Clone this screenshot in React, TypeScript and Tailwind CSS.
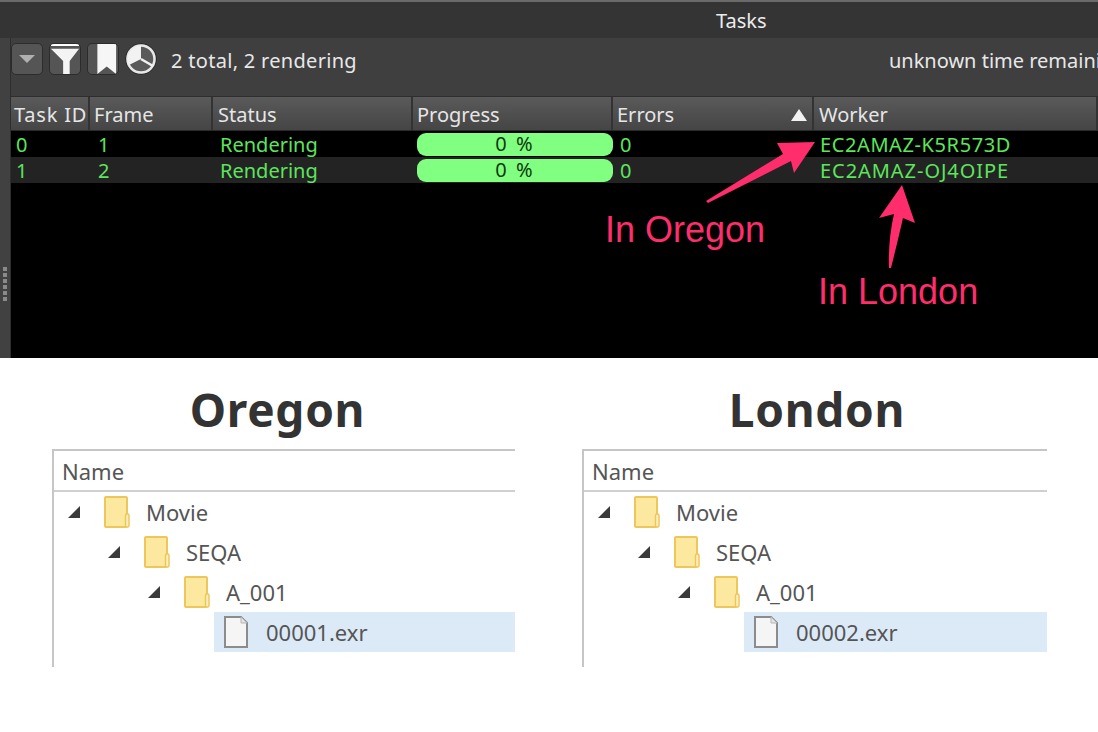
const uiFont = "font-['Noto_Sans',sans-serif]";

const columns = [
  { label: 'Task ID', width: 'w-[79px]', extra: 'pl-[3px] tracking-[0.8px]' },
  { label: 'Frame', width: 'w-[123px]', extra: 'pl-[4px]' },
  { label: 'Status', width: 'w-[200px]', extra: 'pl-[5px]' },
  { label: 'Progress', width: 'w-[200px]', extra: 'pl-[4px]' },
  { label: 'Errors', width: 'w-[201px]', extra: 'pl-[4px]', sorted: true },
  { label: 'Worker', width: 'flex-1', extra: 'pl-[5px]' },
];

const rows = [
  { id: '0', frame: '1', worker: 'EC2AMAZ-K5R573D', bg: 'bg-black', spacing: 'tracking-[0.6px]' },
  { id: '1', frame: '2', worker: 'EC2AMAZ-OJ4OIPE', bg: 'bg-[#232323]', spacing: 'tracking-[0.95px]' },
];

function ToolButton({ children }: { children: React.ReactNode }) {
  return (
    <div className="w-8 h-8 shrink-0 rounded-[5px] border border-[#2c2c2c] bg-[#555555] flex items-center justify-center overflow-hidden">
      {children}
    </div>
  );
}

function TaskTable() {
  return (
    <div className="flex-1 flex flex-col bg-black">
      <div className="flex h-[35px] pb-[1px] bg-[#2a2a2a] border-t border-[#2e2e2e]">
        {columns.map((c) => (
          <div
            key={c.label}
            className={`${c.width} ${c.extra} flex items-center justify-between pr-[5px] pt-[3px] bg-gradient-to-b from-[#5a5a5a] to-[#454545] border-r-2 border-[#333333] text-[#e6e6e6] text-[20px] whitespace-nowrap`}
          >
            <span>{c.label}</span>
            {c.sorted && (
              <svg width="16" height="12" viewBox="0 0 16 12">
                <path d="M8 0 L16 12 L0 12 Z" fill="#f2f2f2" />
              </svg>
            )}
          </div>
        ))}
      </div>
      {rows.map((r) => (
        <div key={r.id} className={`flex h-[26px] items-center text-[20px] text-[#5ce65c] ${r.bg}`}>
          <div className="w-[79px] pl-[5px] pt-[2px]">{r.id}</div>
          <div className="w-[123px] pl-[8px] pt-[2px]">{r.frame}</div>
          <div className="w-[200px] pl-[7px] pt-[2px]">Rendering</div>
          <div className="w-[200px] pl-[4px]">
            <div className="w-[196px] h-[23px] rounded-[9px] bg-[#80ff80] text-[#0f3a0f] flex items-center justify-center tracking-[2px]">
              0 %
            </div>
          </div>
          <div className="w-[201px] pl-[7px] pt-[2px]">0</div>
          <div className={`pl-[6px] pt-[2px] whitespace-nowrap ${r.spacing}`}>{r.worker}</div>
        </div>
      ))}
    </div>
  );
}

function Arrows() {
  return (
    <svg className="absolute left-0 top-0 pointer-events-none" width="1098" height="358" viewBox="0 0 1098 358">
      <path d="M815 142 L794 173 L791 161 L708 203 L706 201 L783 154 L777 143 Z" fill="#ff2d6b" />
      <path d="M902 185 L915 223 L903 218 Q898 240 891 268 L889 268 Q888 240 894 214 L879 218 Z" fill="#ff2d6b" />
    </svg>
  );
}

function RenderPanel() {
  return (
    <section className={`relative h-[358px] flex flex-col overflow-hidden ${uiFont}`}>
      <div className="h-[38px] shrink-0 bg-[#343434] border-t-2 border-[#6a6a6a] flex items-center pl-[716px] pt-[2px] text-[20px] text-[#ececec]">
        Tasks
      </div>
      <div className="flex-1 flex min-h-0">
        <div className="w-[11px] shrink-0 bg-[#414141] border-r border-[#2e2e2e] flex flex-col items-center justify-center gap-[2px] pt-[172px]">
          {[0, 1, 2, 3, 4, 5].map((i) => (
            <div key={i} className="w-1 h-1 bg-[#8a8a8a]" />
          ))}
        </div>
        <div className="flex-1 flex flex-col min-w-0">
          <div className="h-[58px] shrink-0 bg-[#3f3f3f] flex items-center gap-[6px] text-[20px] text-[#e8e8e8] whitespace-nowrap pb-[16px]">
            <ToolButton>
              <svg width="16" height="8" viewBox="0 0 16 8">
                <path d="M0 0 L16 0 L8 8 Z" fill="#b0b0b0" />
              </svg>
            </ToolButton>
            <ToolButton>
              <svg width="32" height="32" viewBox="0 0 32 32">
                <path d="M1 0 H31 V2 H1 Z" fill="#ffffff" />
                <path d="M1 5 H31 L21 18 V32 H14 V18 Z" fill="#f4f4f4" />
              </svg>
            </ToolButton>
            <ToolButton>
              <svg width="32" height="32" viewBox="0 0 32 32">
                <path d="M10 0 H30 V32 L20 24 L10 32 Z" fill="#f6f6f6" />
              </svg>
            </ToolButton>
            <div className="w-8 h-8 shrink-0 rounded-full border border-[#2c2c2c] bg-[#555555] flex items-center justify-center">
              <svg width="30" height="30" viewBox="0 0 30 30">
                <circle cx="15" cy="15" r="13.5" fill="#5a5a5a" stroke="#e8e8e8" strokeWidth="2.5" />
                <path d="M15 15 V1.5 A13.5 13.5 0 0 0 3 21 Z" fill="#f2f2f2" />
                <path d="M15 15 L27 22" stroke="#f2f2f2" strokeWidth="2.5" />
              </svg>
            </div>
            <span className="ml-[8px] pt-[4px] tracking-[0.3px]">2 total, 2 rendering</span>
            <span className="ml-[526px] pt-[4px]">unknown time remaining</span>
          </div>
          <TaskTable />
        </div>
      </div>
      <Arrows />
      <span className="absolute left-[605px] top-[209px] text-[36px] leading-[42px] text-[#ff2d6b] font-['Liberation_Sans',sans-serif]">
        In Oregon
      </span>
      <span className="absolute left-[818px] top-[271px] text-[36px] leading-[42px] text-[#ff2d6b] font-['Liberation_Sans',sans-serif]">
        In London
      </span>
    </section>
  );
}

function FolderIcon() {
  return (
    <svg width="26" height="32" viewBox="0 0 26 32" className="shrink-0">
      <rect x="1" y="1" width="22" height="30" rx="1" fill="#fde89f" stroke="#eec75c" strokeWidth="2" />
      <rect x="21.5" y="18" width="3.5" height="13" rx="1.5" fill="#fdf0bd" stroke="#eec75c" strokeWidth="1.5" />
    </svg>
  );
}

function Expander() {
  return (
    <svg width="12" height="12" viewBox="0 0 12 12" className="shrink-0">
      <path d="M12 0 V12 H0 Z" fill="#3a3a3a" />
    </svg>
  );
}

function FolderRow({ label, indent }: { label: string; indent: string }) {
  return (
    <div className={`h-10 flex items-center ${indent}`}>
      <Expander />
      <div className="w-6 shrink-0" />
      <FolderIcon />
      <span className="ml-[16px] text-[#555555]">{label}</span>
    </div>
  );
}

function ExplorerPane({ title, titleWidth, file, paneWidth }: { title: string; titleWidth: string; file: string; paneWidth: string }) {
  return (
    <div className={`${paneWidth} flex flex-col`}>
      <h2 className={`${titleWidth} h-[91px] pt-[12px] flex items-center justify-center text-[46px] font-bold text-[#333333] tracking-[0.7px]`}>
        {title}
      </h2>
      <div className="h-[218px] border-l-2 border-t-2 border-[#c6c6c6] text-[22px] leading-none">
        <div className="h-[41px] border-b-2 border-[#d0d0d0] flex items-center pl-[8px] text-[#555555]">Name</div>
        <div>
          <FolderRow label="Movie" indent="pl-[14px]" />
          <FolderRow label="SEQA" indent="pl-[54px]" />
          <FolderRow label="A_001" indent="pl-[94px]" />
          <div className="ml-[160px] h-10 bg-[#dceaf8] flex items-center pl-[10px]">
            <svg width="24" height="32" viewBox="0 0 24 32" className="shrink-0">
              <path d="M1 1 H17 L23 7 V31 H1 Z" fill="#f5f5f5" stroke="#8c8c8c" strokeWidth="2" />
              <path d="M17 1 V7 H23" fill="#e4e4e4" stroke="#b5b5b5" strokeWidth="1" />
            </svg>
            <span className="ml-[18px] text-[#555555]">{file}</span>
          </div>
        </div>
      </div>
    </div>
  );
}

export default function App() {
  return (
    <div className="w-[1098px] h-[732px] bg-white overflow-hidden">
      <RenderPanel />
      <div className={`flex pl-[52px] gap-[67px] ${uiFont}`}>
        <ExplorerPane title="Oregon" titleWidth="w-[451px]" file="00001.exr" paneWidth="w-[463px]" />
        <ExplorerPane title="London" titleWidth="w-[470px]" file="00002.exr" paneWidth="w-[465px]" />
      </div>
    </div>
  );
}
